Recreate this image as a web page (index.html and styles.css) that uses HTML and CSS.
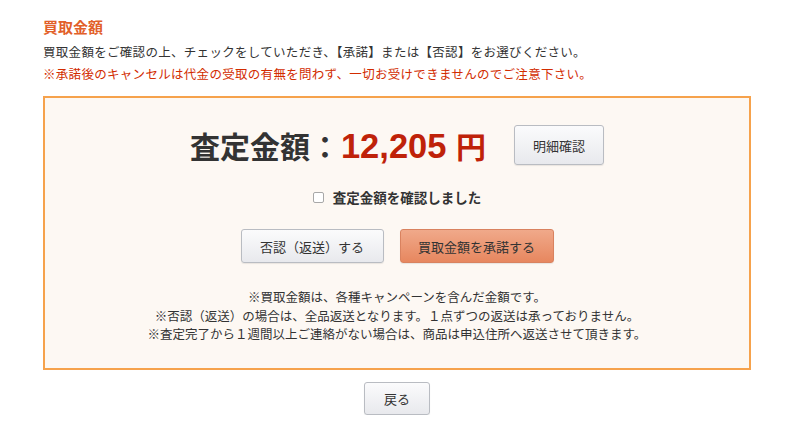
FILE: index.html
```html
<!DOCTYPE html>
<html lang="ja">
<head>
<meta charset="utf-8">
<link rel="stylesheet" href="styles.css">
</head>
<body>
<div class="page">
  <h2 class="title">買取金額</h2>
  <p class="lead">買取金額をご確認の上、チェックをしていただき、【承諾】または【否認】をお選びください。</p>
  <p class="warn">※承諾後のキャンセルは代金の受取の有無を問わず、一切お受けできませんのでご注意下さい。</p>
  <div class="box">
    <div class="price-row">
      <div class="price"><span class="label">査定金額：</span><span class="amount">12,205 </span><span class="yen">円</span></div>
      <button class="btn btn-detail">明細確認</button>
    </div>
    <label class="confirm"><span class="check"></span>査定金額を確認しました</label>
    <div class="actions">
      <button class="btn btn-deny">否認（返送）する</button>
      <button class="btn btn-accept">買取金額を承諾する</button>
    </div>
    <div class="notes">
      <p>※買取金額は、各種キャンペーンを含んだ金額です。</p>
      <p>※否認（返送）の場合は、全品返送となります。１点ずつの返送は承っておりません。</p>
      <p>※査定完了から１週間以上ご連絡がない場合は、商品は申込住所へ返送させて頂きます。</p>
    </div>
  </div>
  <div class="back-row"><button class="btn btn-back">戻る</button></div>
</div>
</body>
</html>
```

FILE: styles.css
```css
* { box-sizing: border-box; }
html, body { margin: 0; padding: 0; background: #fff; }
body {
  font-family: "Noto Sans CJK JP", "Noto Sans", sans-serif;
  color: #333;
}
.page {
  width: 708px;
  margin-left: 43px;
  padding-top: 16px;
}
.title {
  margin: 0;
  font-size: 15px;
  line-height: 22px;
  font-weight: bold;
  color: #e2602a;
}
.lead, .warn {
  margin: 0;
  font-size: 12.5px;
  line-height: 22px;
  letter-spacing: 0.3px;
}
.lead { margin-top: 3px; color: #333; }
.warn { color: #d22c00; }
.box {
  margin-top: 11px;
  border: 2px solid #f6a24c;
  background: #fdf8f3;
  height: 274px;
  padding-top: 27px;
  display: flex;
  flex-direction: column;
  align-items: center;
}
.price-row {
  display: flex;
  align-items: center;
  gap: 28px;
  height: 40px;
}
.price {
  font-weight: bold;
  font-size: 30px;
  line-height: 40px;
  white-space: nowrap;
  display: flex;
  align-items: baseline;
}
.price .label { color: #333; margin-right: 1px; }
.price .amount {
  color: #bf2209;
  font-family: "Liberation Sans", Arial, sans-serif;
  font-size: 34.5px;
  white-space: pre;
}
.price .yen {
  color: #bf2209;
  font-size: 30px;
}
.btn {
  font-family: "Noto Sans CJK JP", sans-serif;
  font-size: 13px;
  color: #333;
  border: 1px solid #b9bcc2;
  border-radius: 3px;
  background: linear-gradient(#fbfbfc, #e8e9ed);
  box-shadow: 0 1px 1px rgba(0,0,0,0.08);
  padding: 0;
  cursor: pointer;
}
.btn-detail { width: 90px; height: 40px; }
.confirm {
  margin-top: 23px;
  display: flex;
  align-items: center;
  gap: 9px;
  font-size: 13.5px;
  font-weight: bold;
  line-height: 18px;
  color: #333;
}
.check {
  width: 11px;
  height: 11px;
  border: 1px solid #a8a8a8;
  border-radius: 2px;
  background: #fff;
}
.actions {
  margin-top: 23px;
  display: flex;
  gap: 16px;
}
.btn-deny { width: 143px; height: 34px; }
.btn-accept {
  width: 154px;
  height: 34px;
  border-color: #d9825f;
  background: linear-gradient(#f0a98a, #e7875f);
}
.notes {
  margin-top: 25px;
  text-align: center;
  font-size: 12.5px;
  line-height: 18.5px;
  color: #333;
}
.notes p { margin: 0; }
.back-row {
  display: flex;
  justify-content: center;
  margin-top: 12px;
}
.btn-back { width: 66px; height: 33px; }
```
